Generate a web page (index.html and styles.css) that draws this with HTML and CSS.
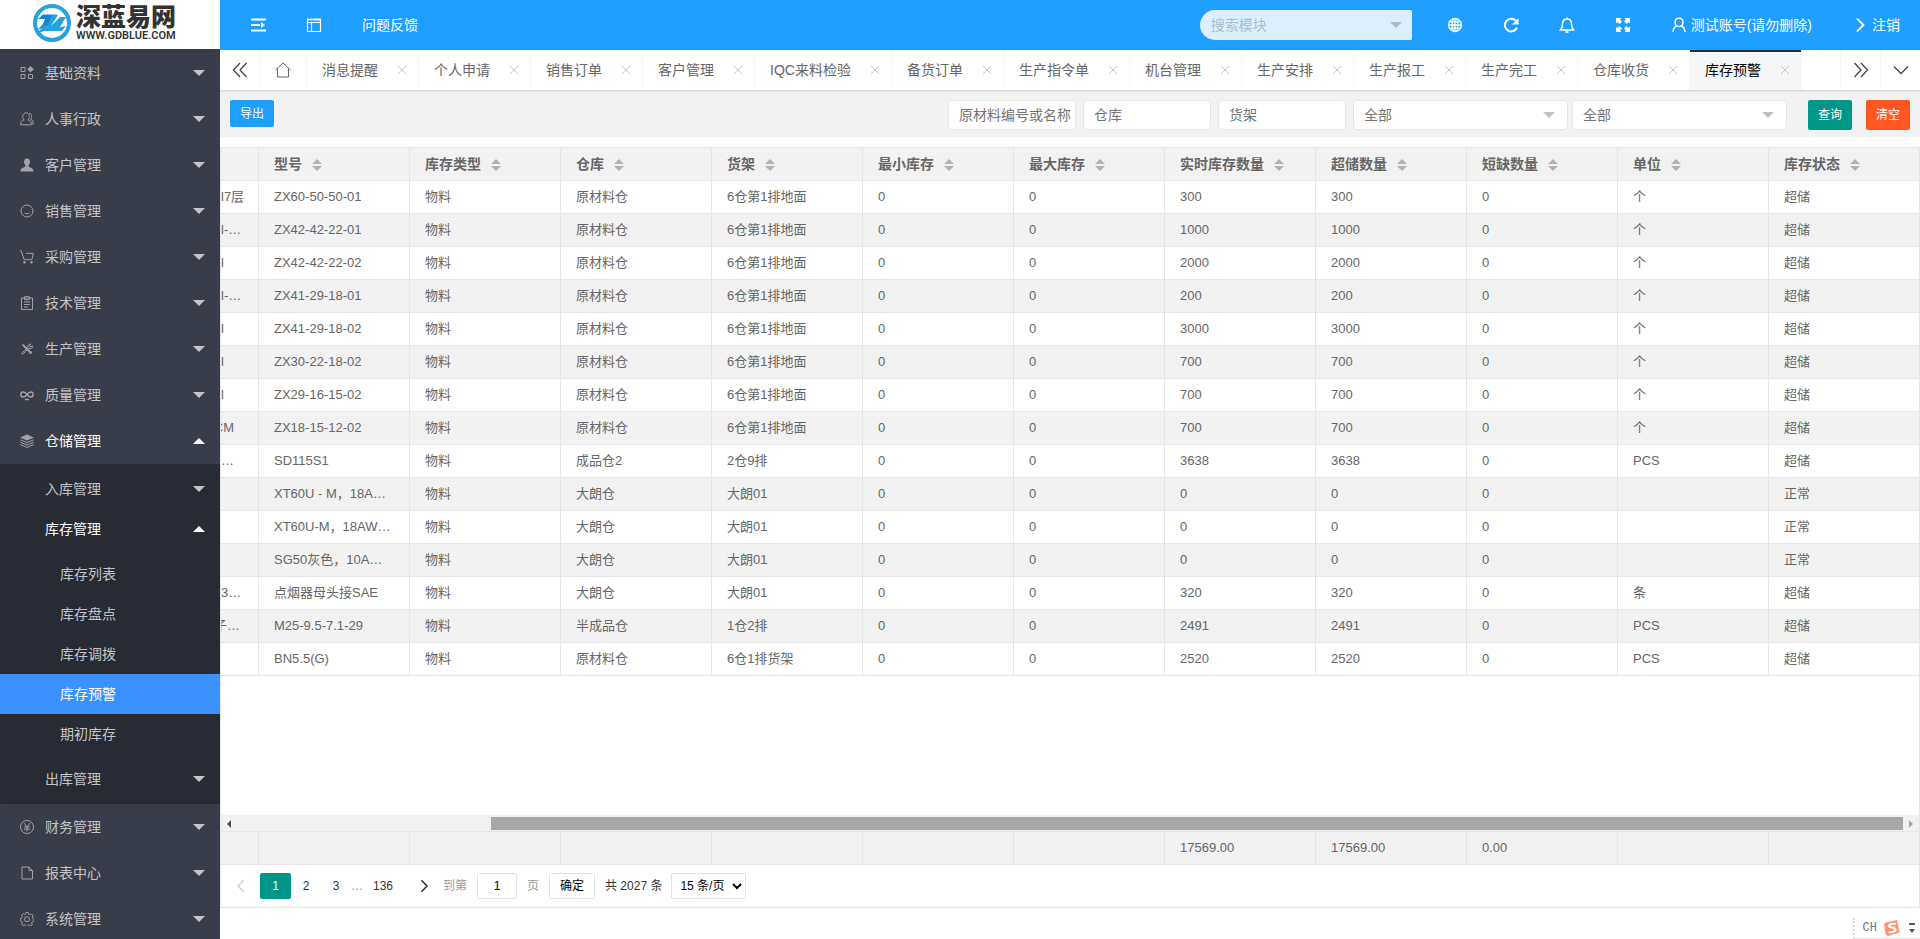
FILE: index.html
```html
<!DOCTYPE html>
<html lang="zh-CN">
<head>
<meta charset="utf-8">
<title>库存预警</title>
<link rel="stylesheet" href="styles.css">
</head>
<body>
<svg class="defs" aria-hidden="true">
  <symbol id="x" viewBox="0 0 10 10"><path d="M1 1l8 8M9 1L1 9"/></symbol>
  <symbol id="right" viewBox="0 0 16 16"><path d="M5 1.500L11.500 8 5 14.500" stroke-width="1.800"/></symbol>
  <symbol id="sort" viewBox="0 0 10 12"><path d="M5 0l5 5H0zM0 7h10l-5 5z"/></symbol>
</svg>

<aside class="side">
  <a class="logo" href="#">
    <svg class="logo-mark" viewBox="0 0 38 38"><circle cx="19" cy="19" r="17" fill="none" stroke="#25a3df" stroke-width="4"/><path d="M5 15l5-4.500h14l-7 8.500-2 3-11 4c4-3 7-7 8-11z" fill="#1686cf"/><path d="M19 11h6l-7 11 9-9h6l-6 10 6-1-4 5H11l-8 3 8-8 4-1z" fill="#25a3df"/></svg>
    <span class="logo-text"><b>深蓝易网</b><small>WWW.GDBLUE.COM</small></span>
  </a>
  <nav class="menu">
    <a class="item" href="#"><svg class="ico" viewBox="0 0 14 14"><path d="M1 1.500h4v4H1zM1 8.500h4v4H1zM8.500 8.500h4v4h-4z"/><path class="solid" d="M10.500 0l3.300 3.300-3.300 3.300-3.300-3.300z"/></svg><span>基础资料</span><i class="caret"></i></a>
    <a class="item" href="#"><svg class="ico" viewBox="0 0 14 14"><path d="M4 7.800C1.500 5 3 .8 6 .8s4.500 4.200 2 7c3 .8 3.300 2.500 3.300 5H.7c0-2.500.3-4.200 3.300-5zM9 1.300c2.800.2 3.500 3.500 1.500 6 2.300.6 2.800 2.200 2.800 4.500h-1.500"/></svg><span>人事行政</span><i class="caret"></i></a>
    <a class="item" href="#"><svg class="ico" viewBox="0 0 14 14"><path class="solid" d="M7 .5c2 0 3 1.300 3 3.200 0 1.600-.7 2.600-1.300 3.500v1.500c1.500.9 4.800 1 4.800 4.800H.5c0-3.800 3.300-3.900 4.800-4.800V7.200C4.700 6.300 4 5.300 4 3.700 4 1.800 5 .5 7 .5z"/></svg><span>客户管理</span><i class="caret"></i></a>
    <a class="item" href="#"><svg class="ico" viewBox="0 0 14 14"><circle cx="7" cy="7" r="6"/><path d="M4.500 9c1.500 1 3.500 1 5 0"/></svg><span>销售管理</span><i class="caret"></i></a>
    <a class="item" href="#"><svg class="ico" viewBox="0 0 14 14"><path d="M0 .7h1.200l3 9h7.600l1.600-6.400H6"/><circle class="solid" cx="4.500" cy="12.300" r="1.200"/><circle class="solid" cx="11.500" cy="12.300" r="1.200"/></svg><span>采购管理</span><i class="caret"></i></a>
    <a class="item" href="#"><svg class="ico" viewBox="0 0 14 14"><path d="M1.500 2h11v11.500h-11zM4.500.7h5v3h-5zM4 6h6M4 8.500h6M4 11h4"/></svg><span>技术管理</span><i class="caret"></i></a>
    <a class="item" href="#"><svg class="ico" viewBox="0 0 14 14"><path d="M3 3l8.500 8.500" stroke-width="1.800"/><path d="M2 3.500L3.500 2M2.500 12.500l-1-1 6-6 1 1zM8 5.500c-.6-2 .8-3.500 2.500-3.500L9.500 4l1 1 2-1c.2 2-1.500 3.300-3.500 2.500M9 11.500l2.500-2.500"/></svg><span>生产管理</span><i class="caret"></i></a>
    <a class="item" href="#"><svg class="ico" viewBox="0 0 14 14"><path d="M7 6.500C5.500 4.500 4.500 4 3.300 4a2.500 2.500 0 000 5C4.500 9 5.500 8.500 7 6.500s2.500-2.500 3.700-2.500a2.500 2.500 0 010 5C9.500 9 8.500 8.500 7 6.500zM5 11.500h4" stroke-width="1.400"/></svg><span>质量管理</span><i class="caret"></i></a>
    <a class="item open" href="#"><svg class="ico" viewBox="0 0 14 14"><path class="solid" d="M7 .5l7 3-7 3-7-3z"/><path d="M.3 5.800L7 8.600l6.700-2.800M.3 8.200L7 11l6.700-2.800M.3 10.600L7 13.400l6.700-2.800"/></svg><span>仓储管理</span><i class="caret"></i></a>
    <div class="sub">
      <a class="child" href="#"><span>入库管理</span><i class="caret"></i></a>
      <a class="child open" href="#"><span>库存管理</span><i class="caret"></i></a>
      <div class="leafs">
        <a class="leaf" href="#">库存列表</a>
        <a class="leaf" href="#">库存盘点</a>
        <a class="leaf" href="#">库存调拨</a>
        <a class="leaf current" href="#">库存预警</a>
        <a class="leaf" href="#">期初库存</a>
      </div>
      <a class="child" href="#"><span>出库管理</span><i class="caret"></i></a>
    </div>
    <a class="item" href="#"><svg class="ico" viewBox="0 0 14 14"><circle cx="7" cy="7" r="6.500"/><path d="M4 3l3 4 3-4M4 7h6M4 9.200h6M7 7v4.500"/></svg><span>财务管理</span><i class="caret"></i></a>
    <a class="item" href="#"><svg class="ico" viewBox="0 0 14 14"><path d="M2 1h7l3.500 3.500V13H2zM9 1v3.500h3.500"/></svg><span>报表中心</span><i class="caret"></i></a>
    <a class="item" href="#"><svg class="ico" viewBox="0 0 14 14"><path d="M5.700.6h2.600l.4 1.700 1.500.6 1.500-.9 1.500 1.800-.9 1.300.4 1.300 1.100.5v2.300l-1.600.5-.6 1.200.8 1.500-1.800 1.300-1.300-.9-1 .4-.5 1.400H6.200l-.5-1.400-1.200-.5-1.400.9-1.700-1.600.9-1.400-.5-1.200L.3 8.800V6.500l1.500-.5.500-1.300-.8-1.400L3.200 1.700l1.300.9 1-.4z"/><circle cx="7" cy="7.200" r="2.500"/></svg><span>系统管理</span><i class="caret"></i></a>
  </nav>
</aside>

<main class="main">
  <header class="top">
    <a class="nav" href="#" aria-label="收起菜单"><svg viewBox="0 0 16 16"><path d="M1 2.500h15M1 8h9M1 13.500h15" stroke-width="1.800"/><path class="solid" d="M11 5l4 3-4 3z"/></svg></a>
    <a class="nav" href="#" aria-label="窗口"><svg viewBox="0 0 16 16"><path d="M1.500 2.500h13v12h-13zM1.500 5.500h13M5.500 6v8" stroke-width="1.200"/><path d="M1 2.500h14" stroke-width="2" stroke-dasharray="2 1 2 1 9"/></svg></a>
    <a class="nav" href="#">问题反馈</a>
    <label class="search"><input type="text" placeholder="搜索模块" aria-label="搜索模块"><i class="caret"></i></label>
    <a class="nav" href="#" aria-label="网站"><svg viewBox="0 0 16 16"><g stroke-width="1.300"><circle cx="8" cy="8" r="6.500"/><ellipse cx="8" cy="8" rx="3" ry="6.500"/><path d="M8 1.500v13M1.500 8h13M2.500 4.800h11M2.500 11.200h11"/></g></svg></a>
    <a class="nav" href="#" aria-label="刷新"><svg viewBox="0 0 16 16"><path d="M14 10.500A6.300 6.300 0 1 1 12.500 3.500" stroke-width="2"/><path class="solid" d="M15.500 1v6.500H9z"/></svg></a>
    <a class="nav" href="#" aria-label="消息"><svg viewBox="0 0 16 16"><path d="M1.500 13h13c-1.500-1.500-2-2-2-6 0-3-1.800-5-4.500-5S3.500 4 3.500 7c0 4-.5 4.500-2 6zM6.500 14.500c.8 1 2.200 1 3 0M8 .5V2" stroke-width="1.500"/></svg></a>
    <a class="nav" href="#" aria-label="全屏"><svg viewBox="0 0 16 16"><path class="solid" d="M1 1h5.500L5 2.500l2 2L4.500 7l-2-2L1 6.500zM15 1H9.500L11 2.500l-2 2L11.500 7l2-2L15 6.500zM1 15h5.500L5 13.500l2-2L4.500 9l-2 2L1 9.500zM15 15H9.500l1.500-1.500-2-2L11.500 9l2 2L15 9.500z"/></svg></a>
    <a class="nav" href="#"><svg viewBox="0 0 16 16"><path d="M8 1.200c2.400 0 4 1.700 4 4s-1.600 4.300-4 4.300-4-2-4-4.300 1.600-4 4-4zM2 15c.2-3.200 1.500-5.500 4-6.300M14 15c-.2-3.200-1.500-5.500-4-6.300" stroke-width="1.500"/></svg>测试账号(请勿删除)</a>
    <a class="nav" href="#"><svg viewBox="0 0 16 16"><use href="#right"/></svg>注销</a>
  </header>

  <div class="tabs">
    <button class="ctl" aria-label="向左"><svg viewBox="0 0 16 16"><path d="M8 1L1.500 8 8 15M14.500 1L8 8l6.500 7"/></svg></button>
    <div class="list">
      <a class="tab home" href="#" aria-label="主页"><svg viewBox="0 0 16 16"><path d="M.5 8L8 1l7.500 7M2.500 6.500v8.500h11V6.500"/></svg></a>
      <a class="tab" href="#">消息提醒<svg><use href="#x"/></svg></a>
      <a class="tab" href="#">个人申请<svg><use href="#x"/></svg></a>
      <a class="tab" href="#">销售订单<svg><use href="#x"/></svg></a>
      <a class="tab" href="#">客户管理<svg><use href="#x"/></svg></a>
      <a class="tab" href="#">IQC来料检验<svg><use href="#x"/></svg></a>
      <a class="tab" href="#">备货订单<svg><use href="#x"/></svg></a>
      <a class="tab" href="#">生产指令单<svg><use href="#x"/></svg></a>
      <a class="tab" href="#">机台管理<svg><use href="#x"/></svg></a>
      <a class="tab" href="#">生产安排<svg><use href="#x"/></svg></a>
      <a class="tab" href="#">生产报工<svg><use href="#x"/></svg></a>
      <a class="tab" href="#">生产完工<svg><use href="#x"/></svg></a>
      <a class="tab" href="#">仓库收货<svg><use href="#x"/></svg></a>
      <a class="tab active" href="#">库存预警<svg><use href="#x"/></svg></a>
    </div>
    <button class="ctl" aria-label="向右"><svg viewBox="0 0 16 16"><path d="M1.500 1L8 8l-6.500 7M8 1l6.500 7L8 15"/></svg></button>
    <button class="ctl" aria-label="更多"><svg viewBox="0 0 16 16"><path d="M1 4.500l7 7 7-7"/></svg></button>
  </div>

  <form class="filters">
    <button type="button" class="btn export">导出</button>
    <input class="field" type="text" placeholder="原材料编号或名称" aria-label="原材料编号或名称">
    <input class="field" type="text" placeholder="仓库" aria-label="仓库">
    <input class="field" type="text" placeholder="货架" aria-label="货架">
    <div class="pick"><select aria-label="类型"><option>全部</option></select><i class="caret"></i></div>
    <div class="pick second"><select aria-label="状态"><option>全部</option></select><i class="caret"></i></div>
    <button type="button" class="btn query">查询</button>
    <button type="button" class="btn clear">清空</button>
  </form>

  <section class="grid">
    <div class="body">
      <table>
        <colgroup><col class="c0"><col class="c"><col class="c"><col class="c"><col class="c"><col class="c"><col class="c"><col class="c"><col class="c"><col class="c"><col class="c"><col></colgroup>
        <thead><tr><th></th><th>型号<svg><use href="#sort"/></svg></th><th>库存类型<svg><use href="#sort"/></svg></th><th>仓库<svg><use href="#sort"/></svg></th><th>货架<svg><use href="#sort"/></svg></th><th>最小库存<svg><use href="#sort"/></svg></th><th>最大库存<svg><use href="#sort"/></svg></th><th>实时库存数量<svg><use href="#sort"/></svg></th><th>超储数量<svg><use href="#sort"/></svg></th><th>短缺数量<svg><use href="#sort"/></svg></th><th>单位<svg><use href="#sort"/></svg></th><th>库存状态<svg><use href="#sort"/></svg></th></tr></thead>
        <tbody>
          <tr><td>l7层</td><td>ZX60-50-50-01</td><td>物料</td><td>原材料仓</td><td>6仓第1排地面</td><td>0</td><td>0</td><td>300</td><td>300</td><td>0</td><td>个</td><td>超储</td></tr>
          <tr><td>l-…</td><td>ZX42-42-22-01</td><td>物料</td><td>原材料仓</td><td>6仓第1排地面</td><td>0</td><td>0</td><td>1000</td><td>1000</td><td>0</td><td>个</td><td>超储</td></tr>
          <tr><td>l</td><td>ZX42-42-22-02</td><td>物料</td><td>原材料仓</td><td>6仓第1排地面</td><td>0</td><td>0</td><td>2000</td><td>2000</td><td>0</td><td>个</td><td>超储</td></tr>
          <tr><td>l-…</td><td>ZX41-29-18-01</td><td>物料</td><td>原材料仓</td><td>6仓第1排地面</td><td>0</td><td>0</td><td>200</td><td>200</td><td>0</td><td>个</td><td>超储</td></tr>
          <tr><td>l</td><td>ZX41-29-18-02</td><td>物料</td><td>原材料仓</td><td>6仓第1排地面</td><td>0</td><td>0</td><td>3000</td><td>3000</td><td>0</td><td>个</td><td>超储</td></tr>
          <tr><td>l</td><td>ZX30-22-18-02</td><td>物料</td><td>原材料仓</td><td>6仓第1排地面</td><td>0</td><td>0</td><td>700</td><td>700</td><td>0</td><td>个</td><td>超储</td></tr>
          <tr><td>l</td><td>ZX29-16-15-02</td><td>物料</td><td>原材料仓</td><td>6仓第1排地面</td><td>0</td><td>0</td><td>700</td><td>700</td><td>0</td><td>个</td><td>超储</td></tr>
          <tr><td><span class="tail far">CM</span></td><td>ZX18-15-12-02</td><td>物料</td><td>原材料仓</td><td>6仓第1排地面</td><td>0</td><td>0</td><td>700</td><td>700</td><td>0</td><td>个</td><td>超储</td></tr>
          <tr><td>…</td><td>SD115S1</td><td>物料</td><td>成品仓2</td><td>2仓9排</td><td>0</td><td>0</td><td>3638</td><td>3638</td><td>0</td><td>PCS</td><td>超储</td></tr>
          <tr><td></td><td>XT60U - M，18A…</td><td>物料</td><td>大朗仓</td><td>大朗01</td><td>0</td><td>0</td><td>0</td><td>0</td><td>0</td><td></td><td>正常</td></tr>
          <tr><td></td><td>XT60U-M，18AW…</td><td>物料</td><td>大朗仓</td><td>大朗01</td><td>0</td><td>0</td><td>0</td><td>0</td><td>0</td><td></td><td>正常</td></tr>
          <tr><td></td><td>SG50灰色，10A…</td><td>物料</td><td>大朗仓</td><td>大朗01</td><td>0</td><td>0</td><td>0</td><td>0</td><td>0</td><td></td><td>正常</td></tr>
          <tr><td>3…</td><td>点烟器母头接SAE</td><td>物料</td><td>大朗仓</td><td>大朗01</td><td>0</td><td>0</td><td>320</td><td>320</td><td>0</td><td>条</td><td>超储</td></tr>
          <tr><td><span class="tail">子…</span></td><td>M25-9.5-7.1-29</td><td>物料</td><td>半成品仓</td><td>1仓2排</td><td>0</td><td>0</td><td>2491</td><td>2491</td><td>0</td><td>PCS</td><td>超储</td></tr>
          <tr><td></td><td>BN5.5(G)</td><td>物料</td><td>原材料仓</td><td>6仓1排货架</td><td>0</td><td>0</td><td>2520</td><td>2520</td><td>0</td><td>PCS</td><td>超储</td></tr>
        </tbody>
      </table>
    </div>
    <div class="hbar"><i class="end"></i><span class="gap"></span><span class="thumb"></span><i class="end next"></i></div>
    <table class="total">
      <colgroup><col class="c0"><col class="c"><col class="c"><col class="c"><col class="c"><col class="c"><col class="c"><col class="c"><col class="c"><col class="c"><col class="c"><col></colgroup>
      <tbody><tr><td></td><td></td><td></td><td></td><td></td><td></td><td></td><td>17569.00</td><td>17569.00</td><td>0.00</td><td></td><td></td></tr></tbody>
    </table>
    <div class="pager">
      <a class="arrow off" href="#" aria-label="上一页"><svg class="flip" viewBox="0 0 16 16"><use href="#right"/></svg></a>
      <a class="page on" href="#">1</a><a class="page" href="#">2</a><a class="page" href="#">3</a><span class="dots">…</span><a class="page wide" href="#">136</a>
      <a class="arrow" href="#" aria-label="下一页"><svg viewBox="0 0 16 16"><use href="#right"/></svg></a>
      <label class="skip">到第<input type="text" value="1">页</label>
      <button class="go">确定</button>
      <span class="count">共 2027 条</span>
      <select class="size" aria-label="每页条数"><option>15 条/页</option></select>
    </div>
  </section>
</main>

<div class="ime">
  <span>CH</span>
  <svg viewBox="0 0 16 16"><path d="M2 2.500L13 0l2.500 12.500L4 16 1.500 14 0 4z" fill="#ff9473"/><path d="M12 4c-3-.5-7 0-7 2s6.500 1 6.500 3.500S7 12.500 4.500 12" fill="none" stroke="#fff" stroke-width="2"/></svg>
  <svg class="more" viewBox="0 0 6 12"><path d="M0 1h6v2H0zM0 7h6L3 11z" fill="#555"/></svg>
</div>
</body>
</html>
```
FILE: styles.css
```css
* { box-sizing: border-box; }
body {
  margin: 0;
  height: 100vh;
  display: flex;
  overflow: hidden;
  background: #fff;
  color: #666;
  font: 14px/24px "Liberation Sans", "Noto Sans CJK SC", sans-serif;
}
a { color: inherit; text-decoration: none; }
button, input, select { font: inherit; margin: 0; border: 0; outline: 0; }
svg { fill: none; stroke: currentColor; flex: none; }
.solid { fill: currentColor; stroke: none; }
.defs { position: absolute; width: 0; height: 0; }
.caret {
  flex: none;
  width: 0;
  border: 6px solid transparent;
  border-top-color: currentColor;
  border-bottom: 0;
}

/* sidebar */
.side { width: 220px; flex: none; overflow: hidden; background: #393d49; color: #c4c5c8; }
.logo {
  display: flex;
  align-items: flex-start;
  gap: 5px;
  height: 49px;
  margin-bottom: 1px;
  padding: 4px 0 0 33px;
  background: #fff;
  color: #333;
}
.logo-mark { width: 38px; height: 38px; stroke: none; }
.logo-text { display: flex; flex-direction: column; white-space: nowrap; }
.logo-text b { font-size: 25px; line-height: 26px; font-weight: 900; }
.logo-text small { font: 600 11px/12px Roboto, sans-serif; }
.item, .child { display: flex; align-items: center; padding-right: 15px; }
.item span, .child span { flex: 1; }
.item { height: 46px; padding-left: 20px; }
.item .ico { width: 14px; height: 14px; margin-right: 11px; color: #a0a2a8; }
.child { height: 40px; padding-left: 45px; }
.open { color: #fff; }
.open .caret { border: 6px solid transparent; border-bottom-color: currentColor; border-top: 0; }
.sub { padding: 5px 0; background: #282b33; border-radius: 2px; }
.leafs { padding: 5px 0; }
.leaf { display: block; padding-left: 60px; line-height: 40px; }
.current { background: #3b91ff; color: #fff; }

/* top bar */
.main { flex: 1; min-width: 0; display: flex; flex-direction: column; }
.top { display: flex; align-items: center; height: 50px; padding-left: 10px; background: #1e9fff; color: #fff; }
.nav { display: flex; align-items: center; gap: 4px; padding: 0 20px; white-space: nowrap; }
.nav svg { width: 16px; height: 16px; }
.search {
  display: flex;
  align-items: center;
  width: 212px;
  height: 30px;
  margin: 0 15px 0 auto;
  padding: 0 10px 0 11px;
  border-radius: 20px 2px 2px 20px;
  background: #ddefff;
  color: #a9bccb;
}
.search input { flex: 1; min-width: 0; padding: 0; background: none; }
.search input::placeholder { color: #aabccb; }

/* tabs */
.tabs { position: relative; display: flex; height: 40px; box-shadow: 0 1px 2px rgba(0, 0, 0, .15); }
.tabs svg { width: 16px; height: 16px; }
.list { display: flex; flex: 1; min-width: 0; overflow: hidden; }
.tab, .ctl { display: flex; align-items: center; border-right: 1px solid #f6f6f6; }
.tab { padding: 0 11px 0 15px; white-space: nowrap; line-height: 40px; }
.home { padding: 0 15px; }
.tab:not(.home) svg { width: 10px; height: 10px; margin-left: 19px; color: #c8c8c8; }
.active { background: #f6f6f6; color: #000; box-shadow: inset 0 2px #292b34; }
.ctl { width: 40px; padding: 0; justify-content: center; background: none; color: #444; }
.ctl svg { stroke-width: 1.300; }
.list ~ .ctl { border-right: 0; border-left: 1px solid #f6f6f6; }

/* filters */
.filters { display: flex; align-items: flex-start; height: 47px; margin-bottom: 10px; padding: 10px 10px 0; background: #f2f2f2; }
.btn { width: 44px; height: 30px; padding: 0; border-radius: 2px; color: #fff; font-size: 12px; }
.export { height: 27px; margin-right: auto; background: #1e9fff; }
.query { margin: 0 14px 0 21px; background: #009688; }
.clear { background: #ff5722; }
.field, .pick { height: 30px; margin-right: 7px; border: 1px solid #e6e6e6; border-radius: 4px; background: #fff; }
.field { width: 128px; padding: 0 0 0 10px; }
.field::placeholder { color: #757575; }
.pick { display: flex; align-items: center; width: 215px; margin-right: 4px; padding-right: 12px; color: #c2c2c2; }
.second { margin-right: 0; }
.pick select { flex: 1; padding: 0 0 0 10px; appearance: none; background: none; color: #757575; }

/* data grid */
.grid { flex: 1; min-height: 0; display: flex; flex-direction: column; margin-bottom: 31px; border: 1px solid #e6e6e6; }
.body { flex: 1; min-height: 0; overflow: hidden; }
table { width: 100%; table-layout: fixed; border-collapse: separate; border-spacing: 0; }
.c0 { width: 38px; }
.c { width: 151px; }
th, td {
  height: 33px;
  padding: 0 15px;
  border: 0 solid #e6e6e6;
  border-width: 0 1px 1px 0;
  text-align: left;
  white-space: nowrap;
  overflow: hidden;
}
th:first-child, td:first-child { padding: 0; }
th:last-child, td:last-child { border-right: 0; }
th { background: #f2f2f2; font-size: 14px; font-weight: 700; line-height: 20px; }
th svg { width: 10px; height: 12px; margin-left: 10px; vertical-align: -2px; fill: #b2b2b2; stroke: none; }
td { font-size: 13px; line-height: 20px; }
tbody tr:nth-child(even) { background: #f2f2f2; }
.tail { display: flex; justify-content: flex-end; padding-right: 18px; overflow: hidden; }
.far { padding-right: 24px; }
.hbar { display: flex; height: 16px; padding: 2px 0 1px; background: #f1f1f1; }
.end { width: 16px; display: flex; align-items: center; justify-content: center; color: #505050; }
.end::before { content: ""; border: 4px solid transparent; border-right-color: currentColor; border-left: 0; }
.next { color: #a3a3a3; }
.next::before { border: 4px solid transparent; border-left-color: currentColor; border-right: 0; }
.gap { flex: 254; }
.thumb { flex: 1412; background: #a8a8a8; }
.total { background: #f2f2f2; border-top: 1px solid #e6e6e6; }

/* pager */
.pager { display: flex; align-items: center; height: 42px; padding: 0 0 1px 5px; font-size: 12px; line-height: 26px; color: #333; }
.arrow { display: flex; align-items: center; justify-content: center; width: 38px; }
.arrow svg { width: 14px; height: 14px; }
.off { width: 30px; margin-right: 4px; color: #d2d2d2; }
.flip { transform: scaleX(-1); }
.page { width: 30px; text-align: center; }
.wide { width: 44px; }
.on { width: 31px; border-radius: 2px; background: #009688; color: #fff; }
.dots { width: 10px; color: #999; text-align: center; }
.skip { display: flex; color: #999; }
.skip input { width: 40px; height: 26px; margin: 0 10px; text-align: center; color: #000; }
.skip input, .go, .size { border: 1px solid #e2e2e2; border-radius: 2px; background: #fff; }
.go { width: 46px; height: 26px; margin: 0 10px; padding: 0; color: #000; line-height: 24px; }
.size { width: 75px; height: 26px; margin-left: 9px; padding: 0 0 0 4px; color: #000; }

/* input method bar */
.ime {
  position: absolute;
  right: 0;
  bottom: 0;
  display: flex;
  align-items: center;
  gap: 7px;
  height: 21px;
  padding: 0 5px 0 8px;
  border-left: 2px dotted #ddd;
  border-bottom: 1px solid #e6e6e6;
  color: #777;
  font: 12px/20px "Liberation Mono", monospace;
}
.ime svg { width: 16px; height: 16px; stroke: none; }
.ime .more { width: 6px; height: 12px; margin-left: 2px; }
```
